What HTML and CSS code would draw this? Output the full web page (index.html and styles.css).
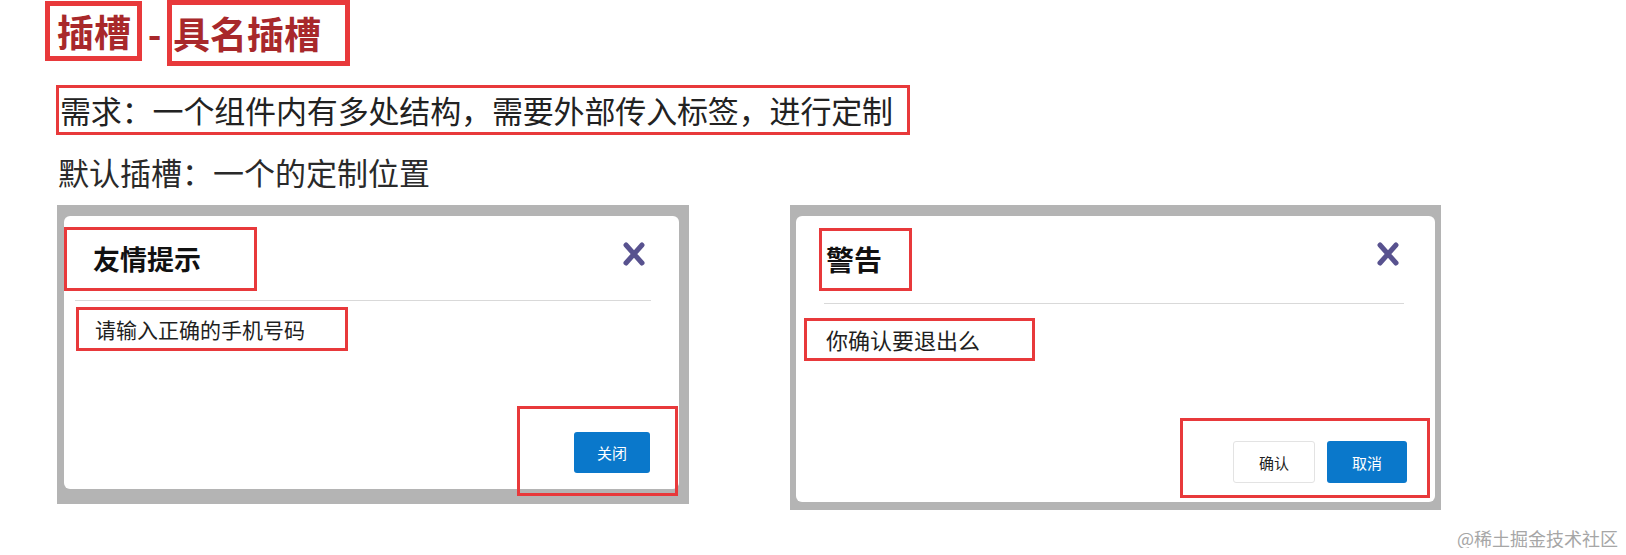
FILE: index.html
```html
<!DOCTYPE html>
<html lang="zh-CN">
<head>
    <meta charset="UTF-8">
    <title>插槽 - 具名插槽</title>
    <link rel="stylesheet" href="styles.css">
</head>
<body>
    <div class="page">
        <div class="title-row">
            <span class="mark-thick part-a">插槽</span>
            <span class="dash">-</span>
            <span class="mark-thick part-b">具名插槽</span>
        </div>

        <div class="mark need">需求：一个组件内有多处结构，需要外部传入标签，进行定制</div>
        <p class="note">默认插槽：一个的定制位置</p>

        <div class="shots">
            <!-- 友情提示 -->
            <div class="shot shot-tip">
                <div class="dialog">
                    <div class="dialog-head">
                        <div class="mark dialog-title">友情提示</div>
                        <svg class="close" viewBox="0 0 24 26"><path d="M4 4 L20 22 M20 4 L4 22"/></svg>
                    </div>
                    <div class="dialog-line"></div>
                    <div class="mark dialog-body">请输入正确的手机号码</div>
                    <div class="mark dialog-foot">
                        <button class="btn btn-primary">关闭</button>
                    </div>
                </div>
            </div>

            <!-- 警告 -->
            <div class="shot shot-confirm">
                <div class="dialog">
                    <div class="dialog-head">
                        <div class="mark dialog-title">警告</div>
                        <svg class="close" viewBox="0 0 24 26"><path d="M4 4 L20 22 M20 4 L4 22"/></svg>
                    </div>
                    <div class="dialog-line"></div>
                    <div class="mark dialog-body">你确认要退出么</div>
                    <div class="mark dialog-foot">
                        <button class="btn btn-plain">确认</button>
                        <button class="btn btn-primary">取消</button>
                    </div>
                </div>
            </div>
        </div>

        <div class="watermark">@稀土掘金技术社区</div>
    </div>
</body>
</html>
```

FILE: styles.css
```css
:root {
    --red: #e8393b;
    --title: #a8282b;
    --text: #262626;
    --blue: #0a78cb;
    --frame: #b4b4b4;
}

* {
    box-sizing: border-box;
}

body {
    margin: 0;
    padding: 0;
    background-color: #fff;
    color: var(--text);
    font-family: "Noto Sans CJK SC", "Noto Sans", sans-serif;
}

.page {
    display: flex;
    flex-direction: column;
    align-items: flex-start;
}

/* Title */
.title-row {
    display: flex;
    align-items: flex-start;
    margin-left: 45px;
    color: var(--title);
    font-size: 37px;
    font-weight: 700;
}

.mark-thick {
    border: 5px solid var(--red);
    line-height: 50px;
}

.part-a {
    width: 97px;
    height: 60px;
    margin-top: 1px;
    padding-left: 7px;
}

.dash {
    width: 25px;
    line-height: 66px;
    text-align: center;
}

.part-b {
    width: 183px;
    height: 66px;
    padding-left: 1px;
    line-height: 56px;
}

/* Annotation boxes */
.mark {
    border: 3px solid var(--red);
}

.need {
    margin: 19px 0 0 56px;
    width: 854px;
    height: 50px;
    padding-left: 1px;
    font-size: 31px;
    line-height: 44px;
    letter-spacing: -0.15px;
    color: #222;
    white-space: nowrap;
}

.note {
    margin: 17px 0 0 58px;
    font-size: 31px;
    line-height: 40px;
    color: #2a2a2a;
}

/* Screenshots of the dialogs */
.shots {
    display: flex;
    align-items: flex-start;
    gap: 101px;
    margin: 13px 0 0 57px;
}

.shot {
    display: flex;
    background-color: var(--frame);
}

.shot-tip {
    width: 632px;
    height: 299px;
    padding: 11px 10px 15px 7px;
}

.shot-confirm {
    width: 651px;
    height: 305px;
    padding: 11px 6px 8px 6px;
}

.dialog {
    flex: 1;
    display: flex;
    flex-direction: column;
    background-color: #fff;
    border-radius: 6px;
}

.dialog-head {
    display: flex;
    justify-content: space-between;
    align-items: center;
}

.dialog-title {
    color: #111;
    font-weight: 700;
    white-space: nowrap;
}

.close {
    width: 24px;
    height: 26px;
    fill: none;
    stroke: #58528f;
    stroke-width: 5;
    stroke-linecap: round;
}

.dialog-line {
    height: 1px;
    background-color: #d9d9d9;
}

.dialog-body {
    font-size: 21px;
    white-space: nowrap;
    color: #1f1f1f;
}

.dialog-foot {
    display: flex;
    justify-content: flex-end;
    align-items: flex-end;
    align-self: flex-end;
    gap: 12px;
    margin-top: auto;
}

.btn {
    font-family: inherit;
    font-size: 15px;
    border-radius: 3px;
    padding: 0;
    cursor: pointer;
}

.btn-primary {
    background-color: var(--blue);
    color: #fff;
    border: none;
}

.btn-plain {
    background-color: #fff;
    color: #222;
    border: 1px solid #e3e3e3;
}

/* 友情提示 sizes */
.shot-tip .dialog-title {
    width: 193px;
    height: 64px;
    margin-top: 11px;
    padding-left: 26px;
    font-size: 27px;
    line-height: 58px;
}

.shot-tip .close {
    margin-right: 33px;
}

.shot-tip .dialog-line {
    margin: 9px 28px 0 11px;
}

.shot-tip .dialog-body {
    width: 272px;
    height: 44px;
    margin: 6px 0 0 12px;
    padding-left: 16px;
    line-height: 38px;
}

.shot-tip .dialog-foot {
    width: 161px;
    height: 90px;
    margin: auto 1px -7px 0;
    padding: 0 25px 20px 0;
}

.shot-tip .btn-primary {
    width: 76px;
    height: 41px;
}

/* 警告 sizes */
.shot-confirm .dialog-title {
    width: 93px;
    height: 63px;
    margin: 12px 0 0 23px;
    padding-left: 4px;
    font-size: 28px;
    line-height: 57px;
}

.shot-confirm .close {
    margin-right: 35px;
}

.shot-confirm .dialog-line {
    margin: 12px 31px 0 28px;
}

.shot-confirm .dialog-body {
    width: 231px;
    height: 43px;
    margin: 14px 0 0 8px;
    padding-left: 19px;
    font-size: 22px;
    line-height: 37px;
}

.shot-confirm .dialog-foot {
    width: 250px;
    height: 80px;
    margin: auto 5px 4px 0;
    padding: 0 20px 12px 0;
}

.shot-confirm .btn-plain {
    width: 82px;
    height: 42px;
}

.shot-confirm .btn-primary {
    width: 80px;
    height: 42px;
}

.watermark {
    align-self: flex-end;
    margin: 18px 8px 0 0;
    font-size: 18px;
    line-height: 20px;
    color: #a6a6a6;
}
```
